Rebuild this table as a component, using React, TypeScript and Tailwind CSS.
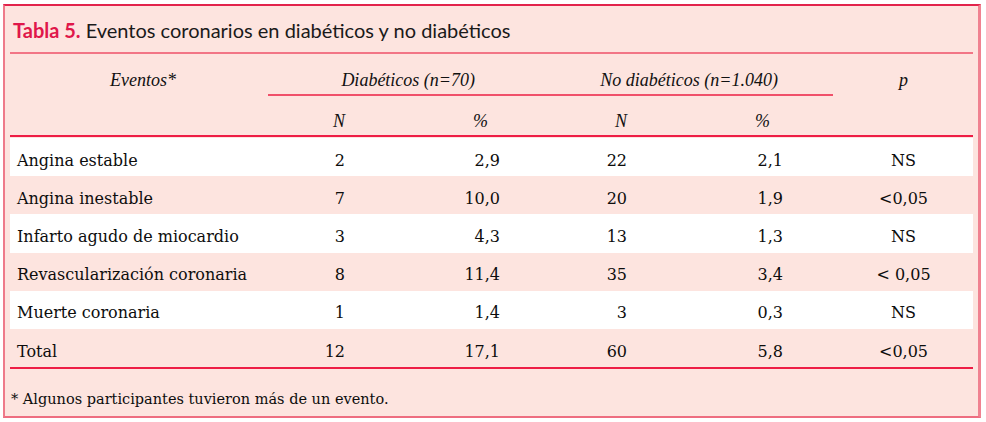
const rows = [
  { label: "Angina estable", n1: "2", p1: "2,9", n2: "22", p2: "2,1", p: "NS" },
  { label: "Angina inestable", n1: "7", p1: "10,0", n2: "20", p2: "1,9", p: "<0,05" },
  { label: "Infarto agudo de miocardio", n1: "3", p1: "4,3", n2: "13", p2: "1,3", p: "NS" },
  { label: "Revascularización coronaria", n1: "8", p1: "11,4", n2: "35", p2: "3,4", p: "< 0,05" },
  { label: "Muerte coronaria", n1: "1", p1: "1,4", n2: "3", p2: "0,3", p: "NS" },
  { label: "Total", n1: "12", p1: "17,1", n2: "60", p2: "5,8", p: "<0,05" },
]

const cols = "grid grid-cols-[270px_65px_155px_127px_156px_191px]"

export default function App() {
  return (
    <div className="w-[986px] h-[422px] bg-white pl-[3px] pt-[4px]">
      <div className="w-[978px] h-[414px] bg-[#fde4df] border-t-2 border-t-[#e2234c] border-l-2 border-l-[#ee7a8a] border-r-[3px] border-r-[#f08291] border-b-2 border-b-[#ee6d80] px-[5px]">
        <div className="h-[46px] flex items-center pl-[3px] pt-[1px] text-[20px] font-['Lato','Open_Sans',sans-serif] text-[#1a1a1a]">
          <span className="font-bold text-[#e0174a] mr-[5px]">Tabla 5.</span>
          <span>Eventos coronarios en diabéticos y no diabéticos</span>
        </div>
        <div className="h-[2px] bg-[#f27586]" />

        <div className="font-['Liberation_Serif',serif] italic text-[18px] text-[#111]">
          <div className={`${cols} h-[40px] items-end`}>
            <div className="text-center pr-[4px]">Eventos*</div>
            <div className="col-span-2 text-right pr-[25px]">Diabéticos (n=70)</div>
            <div className="col-span-2 text-right pr-[5px]">No diabéticos (n=1.040)</div>
            <div className="text-center pl-[50px]">p</div>
          </div>
          <div className="flex">
            <div className="w-[258px]" />
            <div className="w-[565px] h-[1.5px] bg-[#f0506a]" />
          </div>
          <div className={`${cols} h-[39.5px] items-end`}>
            <div />
            <div className="text-right">N</div>
            <div className="text-right pr-[12px]">%</div>
            <div className="text-right">N</div>
            <div className="text-right pr-[13px]">%</div>
            <div />
          </div>
        </div>
        <div className="h-[2px] bg-[#ee1d45]" />

        <div className="pt-[1px] font-['DejaVu_Serif',serif] text-[16px] text-[#0d0d0d]">
          {rows.map((r, i) => (
            <div
              key={r.label}
              className={`${cols} h-[38.2px] items-center pt-[7px] ${i % 2 === 0 && i < 5 ? "bg-white" : ""}`}
            >
              <div className="pl-[7px] whitespace-nowrap">{r.label}</div>
              <div className="text-right">{r.n1}</div>
              <div className="text-right">{r.p1}</div>
              <div className="text-right">{r.n2}</div>
              <div className="text-right">{r.p2}</div>
              <div className="text-center pl-[50px]">{r.p}</div>
            </div>
          ))}
        </div>
        <div className="h-[1.5px] bg-[#ee1d45]" />

        <div className="pt-[20px] pl-[1px] text-[14.5px] font-['DejaVu_Serif',serif] text-[#0d0d0d]">
          * Algunos participantes tuvieron más de un evento.
        </div>
      </div>
    </div>
  )
}
